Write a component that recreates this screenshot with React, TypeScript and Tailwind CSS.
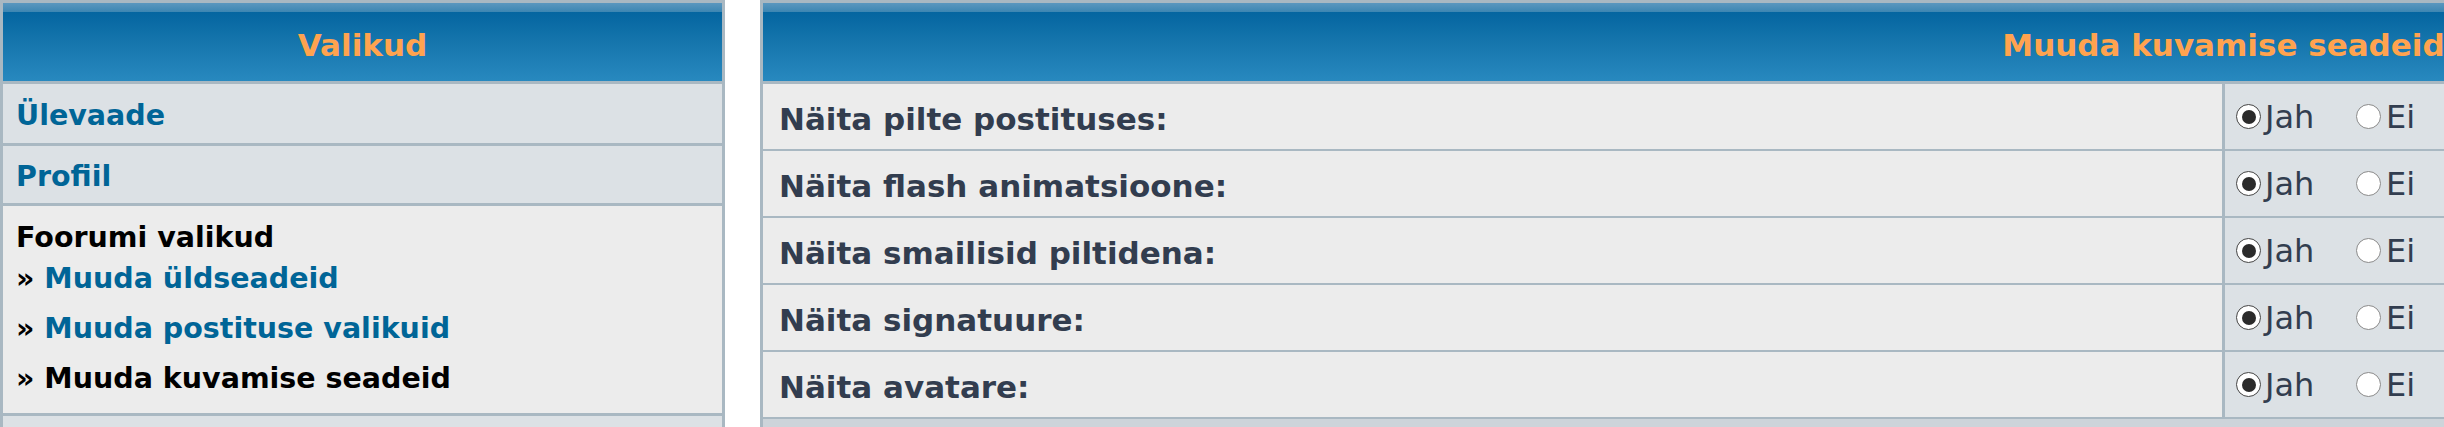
import React from "react";

const settings = [
  "Näita pilte postituses:",
  "Näita flash animatsioone:",
  "Näita smailisid piltidena:",
  "Näita signatuure:",
  "Näita avatare:",
];

function Radio({ checked }: { checked: boolean }) {
  return (
    <span
      className={
        "flex items-center justify-center w-[25px] h-[25px] rounded-full bg-white border-[1.5px] " +
        (checked ? "border-[#444]" : "border-[#8a8a8a]")
      }
    >
      {checked && <span className="w-[14px] h-[14px] rounded-full bg-[#2b2b2b]" />}
    </span>
  );
}

const headerBg =
  "bg-[linear-gradient(to_bottom,#5b97bf_0px,#3c86b2_9px,#0465a0_9px,#1676ad_40px,#2889bf_100%)]";

export default function App() {
  return (
    <div className="w-[2444px] h-[427px] overflow-hidden bg-white flex items-start gap-[35px] font-['DejaVu_Sans',Verdana,sans-serif]">
      {/* Left: navigation */}
      <div className="w-[725px] shrink-0 bg-[#A9B8C2] p-[3px] flex flex-col gap-[3px]">
        <div className={`h-[78px] flex items-center justify-center pt-[6px] ${headerBg}`}>
          <span className="text-[31px] leading-[36px] font-bold text-[#FFA34F]">Valikud</span>
        </div>
        <div className="h-[59px] bg-[#DCE1E5] flex items-center pl-[13px] pt-[5px]">
          <a className="text-[28.5px] leading-[32px] font-bold text-[#006597]">Ülevaade</a>
        </div>
        <div className="h-[57px] bg-[#DCE1E5] flex items-center pl-[13px] pt-[5px]">
          <a className="text-[28.5px] leading-[32px] font-bold text-[#006597]">Profiil</a>
        </div>
        <div className="h-[207px] bg-[#ECECEC] pl-[13px] pt-[16px] text-[28.5px] leading-[32px] font-bold text-black">
          <div>Foorumi valikud</div>
          <div className="mt-[9px]">
            » <a className="text-[#006597]">Muuda üldseadeid</a>
          </div>
          <div className="mt-[18px]">
            » <a className="text-[#006597]">Muuda postituse valikuid</a>
          </div>
          <div className="mt-[18px]">» Muuda kuvamise seadeid</div>
        </div>
        <div className="h-[40px] bg-[#DCE1E5]" />
      </div>

      {/* Right: display settings */}
      <div className="w-[2927px] shrink-0 bg-[#A9B8C2] pt-[3px] px-[3px] flex flex-col">
        <div className={`h-[78px] flex items-center justify-center pt-[6px] ${headerBg}`}>
          <span className="text-[31px] leading-[36px] font-bold text-[#FFA34F]">Muuda kuvamise seadeid</span>
        </div>
        <div className="mt-[3px] grid grid-cols-[1459px_1fr] gap-x-[3px] gap-y-[2px]">
          {settings.map((label) => (
            <React.Fragment key={label}>
              <div className="h-[65px] bg-[#ECECEC] flex items-center pl-[16px] pt-[4px]">
                <span className="text-[31px] leading-[36px] font-bold text-[#323D4F]">{label}</span>
              </div>
              <div className="h-[65px] bg-[#DCE1E5] flex items-center pl-[11px] text-[32px] leading-[36px] text-[#323D4F]">
                <span className="w-[120px] flex items-center gap-[4px]">
                  <Radio checked />
                  <span>Jah</span>
                </span>
                <span className="flex items-center gap-[5px]">
                  <Radio checked={false} />
                  <span>Ei</span>
                </span>
              </div>
            </React.Fragment>
          ))}
          <div className="h-[40px] bg-[#CDD4DA] col-span-2" />
        </div>
      </div>
    </div>
  );
}
